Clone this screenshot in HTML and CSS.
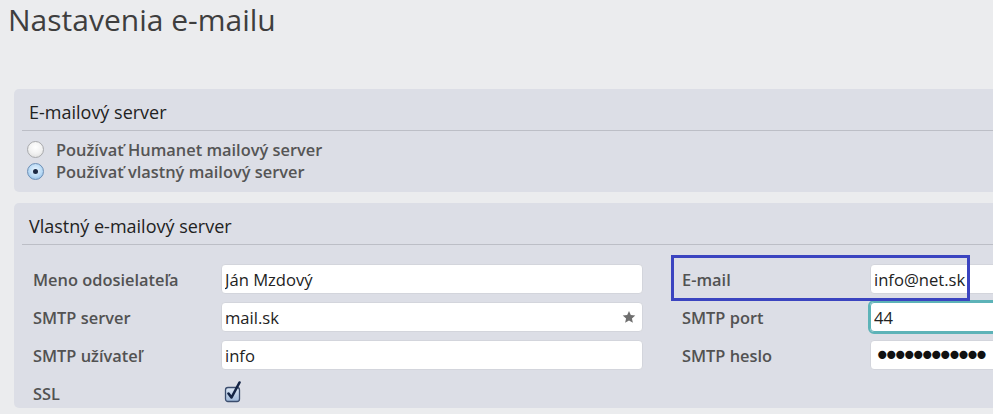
FILE: index.html
```html
<!DOCTYPE html>
<html lang="sk">
<head>
<meta charset="utf-8">
<title>Nastavenia e-mailu</title>
<link rel="stylesheet" href="styles.css">
</head>
<body>
<div class="page">
  <h1 class="title">Nastavenia e-mailu</h1>

  <section class="panel">
    <h2 class="panel-head">E-mailový server</h2>
    <div class="panel-body radios">
      <label class="radio-row"><span class="radio"></span>Používať Humanet mailový server</label>
      <label class="radio-row"><span class="radio checked"></span>Používať vlastný mailový server</label>
    </div>
  </section>

  <section class="panel panel-2">
    <h2 class="panel-head">Vlastný e-mailový server</h2>
    <div class="panel-body form">
      <div class="col">
        <div class="row"><span class="lbl">Meno odosielateľa</span><input class="inp" type="text" value="Ján Mzdový"></div>
        <div class="row"><span class="lbl">SMTP server</span>
          <div class="inp-wrap">
            <input class="inp" type="text" value="mail.sk">
            <svg class="star" viewBox="0 0 24 24" width="14" height="14"><path d="M12 1.5l3.1 7.1 7.7.7-5.8 5.1 1.7 7.6L12 18.1 5.3 22l1.7-7.6-5.8-5.1 7.7-.7z" fill="#6f6f6f"/></svg>
          </div>
        </div>
        <div class="row"><span class="lbl">SMTP užívateľ</span><input class="inp" type="text" value="info"></div>
        <div class="row"><span class="lbl">SSL</span>
          <svg class="check" viewBox="0 0 20 22" width="20" height="22">
            <defs><linearGradient id="cg" x1="0" y1="0" x2="0" y2="1"><stop offset="0" stop-color="#dfe9f6"/><stop offset="1" stop-color="#9db7d9"/></linearGradient></defs>
            <rect x="2.5" y="6.5" width="14" height="14" rx="2.5" fill="url(#cg)" stroke="#3b4d6e" stroke-width="1.3"/>
            <path d="M5.5 12.5l3 4 8-15" fill="none" stroke="#142445" stroke-width="2.6" stroke-linecap="round" stroke-linejoin="round"/>
          </svg>
        </div>
      </div>
      <div class="col col-right">
        <div class="highlight"></div>
        <div class="row"><span class="lbl">E-mail</span><input class="inp" type="text" value="info@net.sk"></div>
        <div class="row"><span class="lbl">SMTP port</span><input class="inp focus" type="text" value="44"></div>
        <div class="row"><span class="lbl">SMTP heslo</span><input class="inp pwd" type="password" value="abcdefghijkl"></div>
      </div>
    </div>
  </section>
</div>
</body>
</html>
```

FILE: styles.css
```css
html, body {
  margin: 0;
  padding: 0;
  background: #ebecee;
  overflow: hidden;
}
body {
  font-family: "Open Sans", "DejaVu Sans", sans-serif;
  color: #333;
}
.page {
  width: 1400px;
}
.title {
  margin: 0 0 49px 8px;
  font-size: 30px;
  font-weight: 500;
  line-height: 40px;
  color: #3e3e3e;
}
.panel {
  margin-left: 14px;
  background: #dcdee6;
  border-radius: 5px;
}
.panel-2 {
  margin-top: 11px;
}
.panel-head {
  margin: 0 0 0 8px;
  padding: 11px 0 6px 7px;
  font-size: 18px;
  font-weight: 400;
  line-height: 24px;
  color: #222;
  border-bottom: 1px solid #bcbec6;
}
.radios {
  display: flex;
  flex-direction: column;
  padding: 7px 0 10px 13px;
}
.radio-row {
  display: flex;
  align-items: center;
  gap: 12px;
  height: 22px;
  font-size: 16.4px;
  font-weight: 600;
  color: #555;
}
.radio {
  box-sizing: border-box;
  width: 17px;
  height: 17px;
  border-radius: 50%;
  border: 1px solid #a9aaad;
  background: radial-gradient(circle at 50% 35%, #ffffff 0%, #f2f2f2 50%, #d9d9d9 100%);
  display: flex;
  align-items: center;
  justify-content: center;
}
.radio.checked {
  border-color: #6c8fb6;
  background: radial-gradient(circle at 50% 40%, #eaf5ff 0%, #b9daf5 55%, #7fb0de 100%);
}
.radio.checked::after {
  content: "";
  width: 5px;
  height: 5px;
  border-radius: 50%;
  background: #1b2a44;
}
.form {
  display: flex;
  gap: 39px;
  padding: 19px 0 0 19px;
}
.col {
  display: flex;
  flex-direction: column;
  gap: 8px;
  width: 610px;
}
.col-right {
  position: relative;
}
.row {
  display: flex;
  align-items: center;
  height: 30px;
}
.lbl {
  width: 188px;
  flex: none;
  font-size: 16.4px;
  font-weight: 600;
  color: #525252;
}
.inp {
  box-sizing: border-box;
  width: 422px;
  height: 30px;
  margin: 0;
  padding: 0 3px;
  border: 1px solid #d3d5dc;
  border-radius: 4px;
  background: #fff;
  font-family: "Open Sans", "DejaVu Sans", sans-serif;
  font-size: 16.6px;
  color: #222;
  outline: none;
}
.inp.focus {
  outline: 2px solid #5db3b8;
  outline-offset: 0;
  border-color: #5db3b8;
}
.inp.pwd {
  font-family: "DejaVu Sans", sans-serif;
  font-size: 28px;
  letter-spacing: -7.5px;
  padding-left: 3px;
  color: #111;
}
.inp-wrap {
  position: relative;
  display: flex;
}
.star {
  position: absolute;
  right: 7px;
  top: 8px;
}
.check {
  margin-left: 2px;
  margin-top: -3px;
}
.highlight {
  position: absolute;
  left: -11px;
  top: -9px;
  width: 299px;
  height: 46px;
  box-sizing: border-box;
  border: 3px solid #3b44c0;
  z-index: 2;
  pointer-events: none;
}
```
